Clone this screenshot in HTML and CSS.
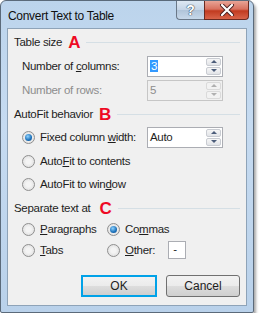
FILE: index.html
```html
<!DOCTYPE html>
<html lang="en">
<head>
  <meta charset="UTF-8" />
  <title>Convert Text to Table</title>
  <link rel="stylesheet" href="styles.css">
</head>
<body>
  <div class="window">
    <div class="titlebar">
      <span class="title">Convert Text to Table</span>
      <div class="caption-buttons">
        <span class="cap-btn help">?</span>
        <span class="cap-btn close">
          <svg width="16" height="12" viewBox="0 0 16 12">
            <path d="M3 1 L13 11 M13 1 L3 11" stroke="#4a2020" stroke-width="4" stroke-linecap="round"/>
            <path d="M3 1 L13 11 M13 1 L3 11" stroke="#ffffff" stroke-width="2.2" stroke-linecap="round"/>
          </svg>
        </span>
      </div>
    </div>

    <div class="client">
      <!-- Table size -->
      <div class="group-head">
        <span>Table size</span><b class="mark">A</b><span class="rule"></span>
      </div>
      <div class="row field-row first">
        <span class="label">Number of <u>c</u>olumns:</span>
        <div class="spin">
          <span class="spin-text"><span class="sel">3</span></span>
          <span class="arrows"><i class="up"></i><i class="down"></i></span>
        </div>
      </div>
      <div class="row field-row disabled">
        <span class="label">Number of rows:</span>
        <div class="spin">
          <span class="spin-text">5</span>
          <span class="arrows"><i class="up"></i><i class="down"></i></span>
        </div>
      </div>

      <!-- AutoFit -->
      <div class="group-head head-b">
        <span>AutoFit behavior</span><b class="mark">B</b><span class="rule"></span>
      </div>
      <div class="row field-row fixed">
        <span class="radio checked"></span>
        <span class="label short">Fixed column <u>w</u>idth:</span>
        <div class="spin">
          <span class="spin-text">Auto</span>
          <span class="arrows"><i class="up"></i><i class="down"></i></span>
        </div>
      </div>
      <div class="row opt">
        <span class="radio"></span><span>Auto<u>F</u>it to contents</span>
      </div>
      <div class="row opt">
        <span class="radio"></span><span>AutoFit to win<u>d</u>ow</span>
      </div>

      <!-- Separate text -->
      <div class="group-head head-c">
        <span>Separate text at</span><b class="mark">C</b><span class="rule"></span>
      </div>
      <div class="sep-grid">
        <div class="opt"><span class="radio"></span><span><u>P</u>aragraphs</span></div>
        <div class="opt"><span class="radio checked"></span><span>Co<u>m</u>mas</span></div>
        <div class="opt"><span class="radio"></span><span><u>T</u>abs</span></div>
        <div class="opt"><span class="radio"></span><span><u>O</u>ther:</span><span class="other-box">-</span></div>
      </div>

      <div class="buttons">
        <button class="btn ok">OK</button>
        <button class="btn">Cancel</button>
      </div>
    </div>
  </div>
</body>
</html>
```

FILE: styles.css
```css
* {
  box-sizing: border-box;
  margin: 0;
  padding: 0;
}

body {
  background: #ffffff;
  font-family: "Liberation Sans", Arial, sans-serif;
  font-size: 11.5px;
  letter-spacing: -0.3px;
  color: #1e1e1e;
  white-space: nowrap;
}

.window {
  width: 254px;
  height: 313px;
  border: 1px solid #5b6a7a;
  border-radius: 6px 6px 2px 2px;
  background: linear-gradient(#bcd4ec, #c6dbf1 40%, #b9d1ea);
  padding: 0 6px 6px 6px;
  display: flex;
  flex-direction: column;
  box-shadow: 2px 3px 3px rgba(0, 0, 0, 0.35);
}

.titlebar {
  height: 27px;
  display: flex;
  justify-content: space-between;
  align-items: flex-start;
}

.title {
  padding: 8px 0 0 1px;
  color: #101010;
  font-size: 12px;
}

.caption-buttons {
  display: flex;
  margin-right: -2px;
}

.cap-btn {
  height: 19px;
  display: flex;
  align-items: center;
  justify-content: center;
  border: 1px solid #6a7888;
  border-top: none;
}

.help {
  width: 28px;
  border-radius: 0 0 0 4px;
  border-right: none;
  background: linear-gradient(#dde8f3, #c4d4e6 50%, #b0c4d9 51%, #c7d8ea);
  color: #ffffff;
  font-weight: bold;
  font-size: 14px;
  letter-spacing: 0;
  text-shadow: 0 0 1px #3a4a5a, 0 0 1px #3a4a5a, 0 0 1px #3a4a5a;
}

.close {
  width: 45px;
  border-radius: 0 0 4px 0;
  border-color: #6a2a20;
  background: linear-gradient(#e8a496, #d8715f 45%, #c13b20 55%, #d8644a);
}

.client {
  flex: 1;
  background: #f0f0f0;
  border: 1px solid #8ea3b8;
  padding: 3px 6px 0 6px;
  display: flex;
  flex-direction: column;
}

.group-head {
  height: 20px;
  display: flex;
  align-items: center;
  gap: 4px;
}

.head-b { margin-top: 3px; }
.head-c { margin-top: 4px; }
.head-c .mark { margin-left: 5px; }

.mark {
  color: #ee0a24;
  font-weight: bold;
  font-size: 17px;
  letter-spacing: 0;
  line-height: 1;
  margin-left: 2px;
}

.rule {
  flex: 1;
  border-top: 1px solid #d5dfe5;
  margin-left: 2px;
}

.row {
  display: flex;
  align-items: center;
  padding-left: 8px;
}

.field-row {
  height: 22px;
  margin-top: 2px;
}

.field-row.first { margin-top: 3px; }

.field-row .label {
  width: 125px;
}

.fixed {
  margin-top: 2px;
}

.fixed .label.short {
  width: 107px;
  margin-left: 5px;
}

.disabled {
  color: #8d8d8d;
}

.spin {
  width: 76px;
  height: 21px;
  border: 1px solid #abadb3;
  background: #ffffff;
  display: flex;
  align-items: center;
  padding: 1px;
}

.disabled .spin {
  border-color: #c6c6c6;
  background: #f0f0f0;
}

.spin-text {
  flex: 1;
  padding-left: 1px;
}

.sel {
  background: #3399ff;
  color: #ffffff;
  padding: 0 1px;
}

.arrows {
  width: 15px;
  height: 17px;
  display: flex;
  flex-direction: column;
  gap: 1px;
}

.arrows i {
  flex: 1;
  display: flex;
  align-items: center;
  justify-content: center;
  border: 1px solid #c9ccd2;
  border-radius: 2px;
  background: linear-gradient(#f6f6f6, #e2e4e8);
}

.arrows i::after {
  content: "";
  border-left: 3px solid transparent;
  border-right: 3px solid transparent;
}

.arrows .up::after { border-bottom: 3px solid #4c5d7a; }
.arrows .down::after { border-top: 3px solid #4c5d7a; }

.disabled .arrows i { border-color: #dadada; background: #f2f2f2; }
.disabled .arrows .up::after { border-bottom-color: #b0b0b0; }
.disabled .arrows .down::after { border-top-color: #b0b0b0; }

.opt {
  height: 20px;
  display: flex;
  align-items: center;
  gap: 5px;
}

.row.opt {
  margin-top: 3px;
}

.radio {
  width: 13px;
  height: 13px;
  border-radius: 50%;
  border: 1px solid #8f8f8f;
  background: radial-gradient(circle at 50% 50%, #f4f4f4 30%, #d8d8d8 100%);
  flex: none;
  position: relative;
}

.radio.checked::after {
  content: "";
  position: absolute;
  left: 2px;
  top: 2px;
  width: 7px;
  height: 7px;
  border-radius: 50%;
  background: radial-gradient(circle at 40% 35%, #8fd3ff, #1a6fb8 60%, #0d4a8a);
}

.sep-grid {
  display: grid;
  grid-template-columns: 85px auto;
  row-gap: 1px;
  padding-left: 8px;
  margin-top: 1px;
}

.other-box {
  width: 18px;
  height: 18px;
  border: 1px solid #abadb3;
  background: #ffffff;
  margin-left: 8px;
  padding-left: 4px;
  line-height: 15px;
}

.buttons {
  display: flex;
  justify-content: flex-end;
  gap: 9px;
  margin-top: 15px;
}

.btn {
  font-family: inherit;
  font-size: 12px;
  letter-spacing: 0;
  color: #1e1e1e;
  width: 74px;
  height: 22px;
  border: 1px solid #707070;
  border-radius: 3px;
  background: linear-gradient(#f2f2f2, #ebebeb 50%, #dddddd 51%, #cfcfcf);
}

.btn.ok {
  width: 76px;
  border: 2px solid #00a2e8;
  border-radius: 0;
}
```
